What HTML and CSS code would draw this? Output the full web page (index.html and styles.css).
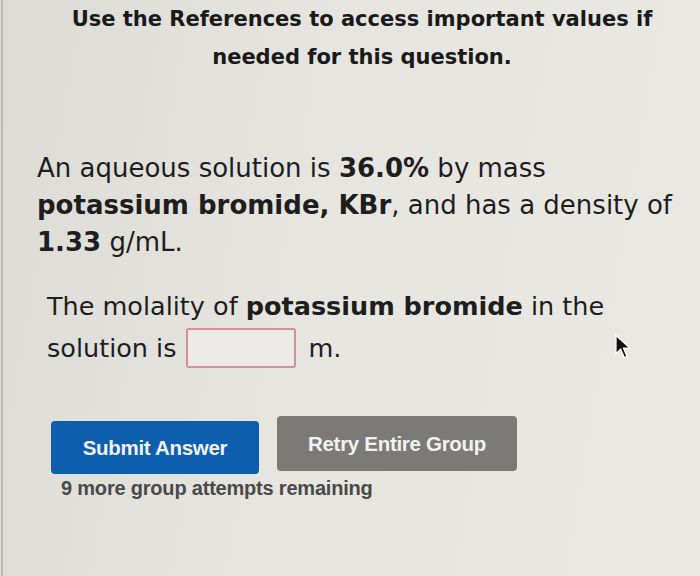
FILE: index.html
```html
<!DOCTYPE html>
<html>
<head>
<meta charset="utf-8">
<link rel="stylesheet" href="styles.css">
</head>
<body>
<div class="page">
  <h1 class="note">Use the References to access important values if<br>needed for this question.</h1>
  <p class="q1">An aqueous solution is <b>36.0%</b> by mass<br><b>potassium bromide, KBr</b>, and has a density of<br><b>1.33</b> g/mL.</p>
  <div class="q2">
    <p class="q2-line">The molality of <b>potassium bromide</b> in the</p>
    <p class="q2-line answer">solution is <span class="input"></span> m.
      <svg class="cursor" width="20" height="26" viewBox="0 0 16 22"><path d="M2 1 L2 17 L6 13 L9 20 L11.5 19 L8.5 12 L14 12 Z" fill="#111" stroke="#fff" stroke-width="1.2"/></svg>
    </p>
  </div>
  <div class="buttons">
    <button class="btn submit">Submit Answer</button>
    <button class="btn retry">Retry Entire Group</button>
  </div>
  <p class="remaining">9 more group attempts remaining</p>
</div>
</body>
</html>
```
FILE: styles.css
```css
html, body {
  margin: 0;
  padding: 0;
  height: 100%;
}
body {
  background: linear-gradient(100deg, #dcdbd5 0%, #e6e5e0 45%, #e9e8e3 100%);
  font-family: "DejaVu Sans", Verdana, sans-serif;
  color: #1e1e1e;
}
.page {
  height: 576px;
  box-sizing: border-box;
  border-left: 2px solid #b9b8b3;
  margin-left: 1px;
  padding: 0 0 0 34px;
  overflow: hidden;
  position: relative;
}
.note {
  margin: 0 0 0 0;
  padding: 0;
  width: 650px;
  font-size: 21px;
  font-weight: bold;
  line-height: 38px;
  text-align: center;
  color: #1a1a1a;
}
.q1 {
  margin: 74px 0 0 0;
  width: 660px;
  font-size: 26px;
  line-height: 37px;
}
.q2 {
  margin: 25px 0 0 10px;
  font-size: 25.5px;
  line-height: 40px;
}
.q2-line {
  margin: 0;
}
.answer {
  display: flex;
  align-items: center;
  position: relative;
  height: 44px;
}
.input {
  display: inline-block;
  width: 106px;
  height: 36px;
  border: 2px solid #d98aa4;
  border-radius: 3px;
  background: #eceae6;
  margin: 0 12px 0 10px;
}
.cursor {
  position: absolute;
  left: 566px;
  top: 8px;
}
.buttons {
  display: flex;
  align-items: flex-start;
  gap: 18px;
  margin: 46px 0 0 14px;
}
.btn {
  border: none;
  border-radius: 4px;
  font-family: "Liberation Sans", Arial, sans-serif;
  font-weight: bold;
  font-size: 20.5px;
  color: #f2f2f2;
  letter-spacing: -0.3px;
  padding: 0;
}
.submit {
  width: 208px;
  height: 53px;
  margin-top: 5px;
  background: #0d5fae;
}
.retry {
  width: 240px;
  height: 55px;
  background: #7b7a77;
}
.remaining {
  margin: 3px 0 0 24px;
  font-family: "Liberation Sans", Arial, sans-serif;
  font-weight: bold;
  font-size: 20px;
  color: #4a4a48;
  letter-spacing: -0.2px;
}
```
